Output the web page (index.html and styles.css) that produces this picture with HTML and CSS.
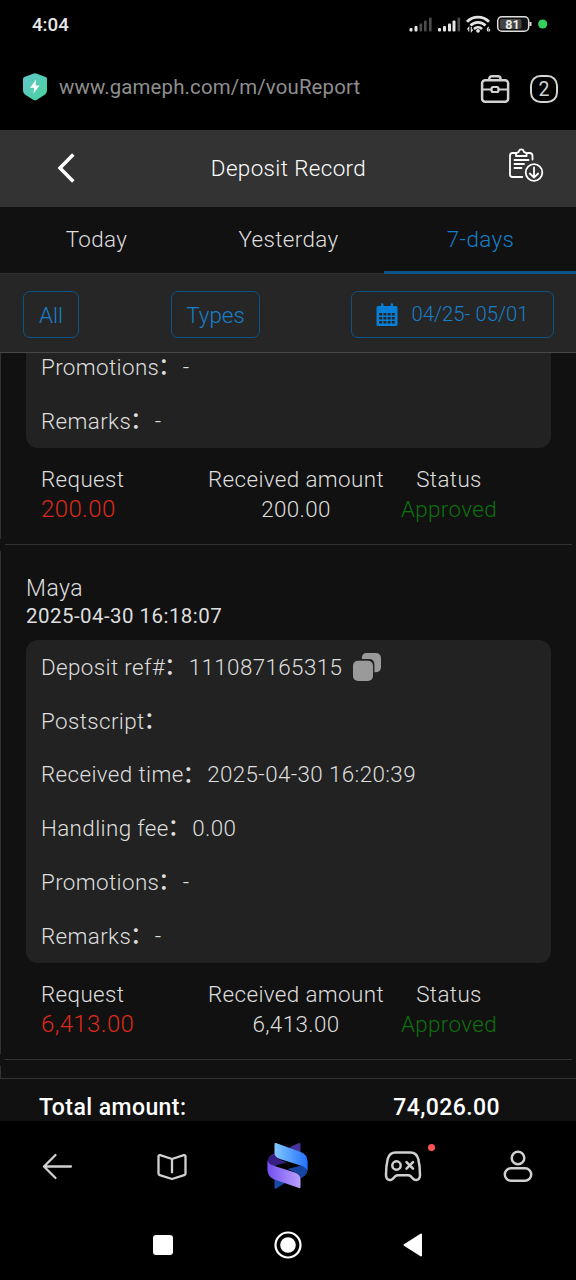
FILE: index.html
```html
<!DOCTYPE html>
<html lang="en">
<head>
<meta charset="utf-8">
<title>Deposit Record</title>
<link rel="stylesheet" href="styles.css">
</head>
<body>
<div class="statusbar">
  <span class="clock">4:04</span>
  <svg class="status-icons" width="142" height="24" viewBox="0 0 142 24">
    <g fill="#e4e4e4">
      <rect x="0.500" y="16" width="3" height="3.500" rx="1"/><rect x="5.500" y="14" width="3" height="5.500" rx="1"/>
      <rect x="29" y="16" width="3" height="3.500" rx="1"/><rect x="34" y="14" width="3" height="5.500" rx="1"/><rect x="39" y="11.500" width="3" height="8" rx="1"/><rect x="43.500" y="8.500" width="3" height="11" rx="1"/>
    </g>
    <g fill="#4c4c4c">
      <rect x="10.500" y="11.500" width="2.600" height="8" rx="1"/><rect x="15" y="8.500" width="2.600" height="11" rx="1"/><rect x="20" y="5.500" width="2.600" height="14" rx="1"/><rect x="48.500" y="5.500" width="2.600" height="14" rx="1"/>
    </g>
    <g fill="none" stroke="#e4e4e4" stroke-width="2.700">
      <path d="M58 9.800a15.300 15.300 0 0 1 22 0"/><path d="M61.500 13.500a10.500 10.500 0 0 1 15 0"/><path d="M65 17a5.800 5.800 0 0 1 8 0"/>
    </g>
    <circle cx="69" cy="18.800" r="1.900" fill="#e4e4e4"/>
    <path d="M59.800 19.500v-4l-1.600 2M62.300 15v4.500l1.600-2M80 15c-2 .5-2.300 4-.6 4 2 0 1.700-2.500-.6-1.800" fill="none" stroke="#e4e4e4" stroke-width="1.100"/>
    <rect x="88.700" y="4.700" width="31" height="14.600" rx="4.300" fill="#111" stroke="#dedede" stroke-width="1.500"/>
    <rect x="91" y="7" width="21.500" height="10" rx="2" fill="#444"/>
    <path d="M121.500 10v4" stroke="#dedede" stroke-width="2"/>
    <text x="103.500" y="16.800" text-anchor="middle" class="battery">81</text>
    <circle cx="133.700" cy="12" r="4.600" fill="#35cf5e"/>
  </svg>
</div>
<div class="urlbar">
  <svg width="26" height="30" viewBox="0 0 26 30">
    <defs><linearGradient id="shield" x1="0" y1="0" x2="1" y2="1"><stop offset="0" stop-color="#63c5cb"/><stop offset="1" stop-color="#46d49c"/></linearGradient></defs>
    <path d="M11.800 1.500q1.200-.6 2.400 0l9.500 3.400q1.300.5 1.300 2V18q0 3.500-3 5.300l-7.500 4.600q-1.500.8-3 0L4 23.300Q1 21.500 1 18V6.900q0-1.500 1.300-2z" fill="url(#shield)"/>
    <path d="M14.200 7.500 8 15.800h4.200L11.500 21.500l6-8.100h-4z" fill="#fff"/>
  </svg>
  <span class="url">www.gameph.com/m/vouReport</span>
  <svg class="case" width="30" height="30" viewBox="0 0 30 30" fill="none" stroke="#d2d2d2" stroke-width="2.500">
    <rect x="2.100" y="6.200" width="26" height="21.500" rx="3"/><path d="M9.300 6V4.800a2.600 2.600 0 0 1 2.600-2.600h6a2.600 2.600 0 0 1 2.600 2.600V6"/>
    <path d="M2 15.500h9.500M18.500 15.500H28" stroke-width="1.800"/><rect x="11.600" y="13" width="6.800" height="5" rx="1.500" stroke-width="2.200"/>
  </svg>
  <span class="tabcount">2</span>
</div>
<header class="header">
  <svg width="20" height="30" viewBox="0 0 20 30" fill="none" stroke="#fff" stroke-width="3.500"><path d="M17.300 1.500 4 15l13.300 13.500"/></svg>
  <h1>Deposit Record</h1>
  <svg class="export" width="36" height="36" viewBox="0 0 36 36" fill="none" stroke="#fff" stroke-width="1.800" stroke-linecap="round" stroke-linejoin="round">
    <path d="M7.500 5H4.500Q2 5 2 7.500v19Q2 29 4.500 29h9.800M19.500 5h2q3 0 3 3v3.500"/>
    <path d="M8 8V6.200q0-1.500 1.500-1.700Q10.800 4.200 11 3q.4-1.600 2.300-1.600T15.600 3q.2 1.200 1.500 1.500 1.500.2 1.500 1.700V8z"/>
    <path d="M6.500 12h14M6.500 16h9.500M6.500 20h7"/><circle cx="26" cy="24.500" r="8.300"/><path d="M26 19.500v10M21.800 25.500l4.200 4 4.200-4"/>
  </svg>
</header>
<nav class="tabs"><a>Today</a><a>Yesterday</a><a class="active">7-days</a></nav>
<div class="filters">
  <button class="all">All</button>
  <button class="types">Types</button>
  <button class="dates">
    <svg width="22" height="24" viewBox="0 0 22 24"><path d="M2 3h3V1.500a1.200 1.200 0 0 1 2.400 0V3h7.200V1.500a1.200 1.200 0 0 1 2.400 0V3h3q1.500 0 1.500 1.500v17q0 1.500-1.500 1.500H2Q.5 23 .5 21.500v-17Q.5 3 2 3z" fill="#087fd7"/>
    <path d="M3.200 11.300h15.600M3.200 15.300h15.600M3.200 19.300h15.600" stroke="#262626" stroke-width="2.600" stroke-dasharray="3 1.200"/></svg>
    <span>04/25- 05/01</span>
  </button>
</div>
<main class="list">
  <section class="record first">
    <div class="card"><p>Promotions<b>：</b>-</p><p>Remarks<b>：</b>-</p></div>
    <div class="amounts">
      <div><span>Request</span><span class="red">200.00</span></div>
      <div><span>Received amount</span><span>200.00</span></div>
      <div><span>Status</span><span class="green">Approved</span></div>
    </div>
  </section>
  <section class="record">
    <div class="method">Maya</div>
    <div class="date">2025-04-30 16:18:07</div>
    <div class="card">
      <p>Deposit ref#<b>：</b>111087165315<svg class="copy" width="30" height="30" viewBox="0 0 30 30" fill="#9a9a9a"><path d="M14 1h9.500Q29 1 29 6.500V15q0 5-5 5.300h-1.600V12.500Q22.400 7 17 7H9.800Q9.800 1 14 1z"/><rect x="1" y="8.700" width="20" height="20.300" rx="5"/></svg></p>
      <p>Postscript<b>：</b></p>
      <p>Received time<b>：</b>2025-04-30 16:20:39</p>
      <p>Handling fee<b>：</b>0.00</p>
      <p>Promotions<b>：</b>-</p>
      <p>Remarks<b>：</b>-</p>
    </div>
    <div class="amounts">
      <div><span>Request</span><span class="red">6,413.00</span></div>
      <div><span>Received amount</span><span>6,413.00</span></div>
      <div><span>Status</span><span class="green">Approved</span></div>
    </div>
  </section>
  <section class="record next"></section>
</main>
<div class="total"><span>Total amount:</span><span>74,026.00</span></div>
<nav class="toolbar">
  <svg width="36" height="36" viewBox="0 0 36 36" fill="none" stroke="#d0d0d0" stroke-width="2.300" stroke-linecap="round" stroke-linejoin="round"><path d="M32 18.500H5M16.500 7 5 18.500 16.500 30"/></svg>
  <svg class="book" width="36" height="36" viewBox="0 0 36 36" fill="none" stroke="#d0d0d0" stroke-width="2.300" stroke-linecap="round" stroke-linejoin="round"><path d="M18 10 6.300 6.200Q4.500 5.800 4.500 7.500v17q0 1.300 1.300 1.700L18 30l12.200-3.800q1.300-.4 1.300-1.700v-17q0-1.700-1.800-1.300L18 10v13.300"/></svg>
  <svg width="44" height="48" viewBox="0 0 44 48">
    <defs>
      <linearGradient id="blue"><stop offset="0" stop-color="#82c8ff"/><stop offset="1" stop-color="#2372ff"/></linearGradient>
      <linearGradient id="violet"><stop offset="0" stop-color="#7350f0"/><stop offset="1" stop-color="#bba0ff"/></linearGradient>
    </defs>
    <path d="M25 4.500 33 1q1.500-.6 1.500 1v12L21 8z" fill="#46329b"/>
    <path d="M19 41 10 46.700q-1.500.4-1.500-1V35z" fill="#1749a4"/>
    <path d="M41.500 18v9q0 6-6 9l-1.500.8q.5-4.500-5.500-6.800l-7-3 12-3q7-2 8-6z" fill="#1646a3"/>
    <path d="M1.500 29V20q0-6 6-8.500l1.500-.6q0 4.600 5 6.600l7 3-10 2.500z" fill="#371e83"/>
    <path d="M8.500 2q0-1.500 1.500-1L34 9.700q7.500 2.500 7.500 10V29q-.5-3.500-7-5.500L14 17Q8.500 15 8.500 11z" fill="url(#blue)"/>
    <path d="M1.500 18.500q1 4 7 5.500L29 30.500q5.500 2 5.500 7V45q0 1.500-1.500 1L9 37.800q-7.500-2.600-7.500-10z" fill="url(#violet)"/>
  </svg>
  <span class="games">
    <svg width="40" height="36" viewBox="0 0 40 36" fill="none" stroke="#d0d0d0" stroke-width="2.500" stroke-linecap="round" stroke-linejoin="round"><path d="M12.500 4.500h15Q33.500 4.500 35.300 11 37 18 37 27q0 4.500-3.500 5-2 .3-3.500-1.300L27.500 28q-1-.8-2.500-.8H15q-1.500 0-2.500.8L10 30.700Q8.500 32.300 6.500 32 3 31.500 3 27q0-9 1.700-16 1.800-6.500 7.800-6.500z"/><circle cx="13.500" cy="17.500" r="4.200"/><path d="m23.500 14.200 6.500 6.500m0-6.500-6.500 6.500"/></svg>
    <i class="dot"></i>
  </span>
  <svg width="36" height="36" viewBox="0 0 36 36" fill="none" stroke="#d0d0d0" stroke-width="2.500"><circle cx="18" cy="10" r="6.300"/><rect x="4.800" y="20.300" width="26.400" height="12.400" rx="6.200"/></svg>
</nav>
<div class="sysnav">
  <svg width="20" height="20" viewBox="0 0 20 20"><rect width="20" height="20" rx="3" fill="#fff"/></svg>
  <svg width="28" height="28" viewBox="0 0 28 28"><circle cx="14" cy="14" r="12.500" fill="none" stroke="#fff" stroke-width="2.200"/><circle cx="14" cy="14" r="7.800" fill="#fff"/></svg>
  <svg width="20" height="24" viewBox="0 0 20 24"><path d="M18 1.500v21L1.500 12z" fill="#fff" stroke="#fff" stroke-width="2" stroke-linejoin="round"/></svg>
</div>
</body>
</html>
```
FILE: styles.css
```css
* { box-sizing: border-box; }
body {
  margin: 0;
  width: 576px;
  height: 1280px;
  overflow: hidden;
  background: #000;
  color: #dedede;
  font: 300 22.400px/30px Roboto, "Noto Sans CJK SC", sans-serif;
  letter-spacing: .38px;
  white-space: nowrap;
  display: flex;
  flex-direction: column;
}
svg { display: block; flex: none; }

.statusbar { height: 50px; display: flex; justify-content: space-between; padding: 10px 25px 0 32px; }
.clock { font-size: 18.700px; font-weight: 500; color: #e6e6e6; letter-spacing: 0; }
.status-icons { margin-top: 2px; }
.battery { font: 700 12.500px Roboto, sans-serif; fill: #ededed; letter-spacing: .2px; }

.urlbar { height: 80px; display: flex; align-items: center; padding: 0 18px 6px 22px; }
.url { flex: 1; margin-left: 11px; font-size: 20.400px; font-weight: 400; color: #8f8f8f; letter-spacing: .15px; }
.case { margin-right: 20px; margin-top: 4px; }
.tabcount {
  width: 28px; height: 28px; margin-top: 4px;
  border: 2.500px solid #d2d2d2; border-radius: 10.500px;
  font-size: 19.500px; font-weight: 400; line-height: 25px; letter-spacing: 0; text-align: center; color: #d2d2d2;
}

.header { height: 77px; background: #333; display: flex; align-items: center; justify-content: space-between; padding: 0 32px 2px 56px; }
.header h1 { margin: 0; padding-right: 7px; flex: 1; text-align: center; font: inherit; color: #fff; }
.export { margin-bottom: 3px; }
.tabs { height: 67px; background: #111; display: grid; grid-template-columns: repeat(3, 1fr); border-bottom: 1px solid #333; }
.tabs a { text-align: center; line-height: 65px; height: 67px; padding-left: 1px; }
.tabs .active { color: #177fca; border-bottom: 3px solid #0c5487; }

.filters { height: 79px; background: #262626; border-bottom: 1px solid #484848; display: flex; align-items: flex-start; padding: 17px 22px 0 23px; }
.filters button {
  height: 47px; padding: 0; background: none; border: 1px solid #0c5487; border-radius: 7px;
  color: #177fca; font: inherit; font-size: 22.400px; letter-spacing: 0;
  display: flex; align-items: center; justify-content: center;
}
.filters .all { width: 56px; }
.filters .types { width: 89px; margin-left: 92px; }
.filters .dates { width: 203px; margin-left: auto; gap: 13px; font-size: 20.320px; }
.dates span { padding-bottom: 2px; }

.list { height: 725px; background: #111; overflow: hidden; }
.record {
  height: 515px; padding: 28px 25px 0 26px;
  background:
    linear-gradient(#333, #333) 5px 100% / 567px 1px no-repeat,
    linear-gradient(#333, #333) 0 6px / 1px calc(100% - 12px) no-repeat;
}
.record.first { height: 192px; padding-top: 0; background-position: 5px 100%, 0 0; background-size: 567px 1px, 1px 186px; }
.record.next { height: 40px; }
.method { font-size: 23px; padding-top: 1px; height: 30px; letter-spacing: .5px; }
.date { font-size: 20.500px; line-height: 26px; font-weight: 400; margin-bottom: 12px; letter-spacing: .45px; }
.card { background: #222; border-radius: 12px; padding: 0 15px; height: 323px; margin-top: -1px; }
.first .card { margin-top: 0; border-radius: 0 0 12px 12px; height: 95px; overflow: hidden; display: flex; flex-direction: column; justify-content: flex-end; }
.card p { margin: 0; height: 53.800px; flex: none; line-height: 52px; display: flex; align-items: center; }
.card b { font-weight: 500; width: 24.500px; margin-left: -1px; padding-bottom: 2px; }
.copy { margin-left: 10px; }
.amounts { display: grid; grid-template-columns: 168px 174px 1fr; padding: 16px 0 0 15px; }
.amounts div { display: flex; flex-direction: column; align-items: center; }
.amounts div:nth-child(2) { margin: 0 -4px; }
.amounts div:first-child { align-items: flex-start; }
.amounts div:last-child { width: 132px; }
.amounts .red { color: #dc2a1a; font-size: 24px; }
.amounts .green { color: #0e700e; }

.total { height: 43px; background: #111; border-top: 1px solid #333; display: flex; justify-content: space-between; padding: 14px 76px 0 39px; color: #fff; font-size: 23px; font-weight: 500; letter-spacing: .42px; }
.total span { height: 28px; }

.toolbar { height: 90px; padding: 0 40px 0 39px; display: grid; grid-template-columns: 115px 112px 117px 1fr 36px; align-items: center; }
.book { margin-top: 1px; }
.games { position: relative; width: 40px; }
.dot { position: absolute; right: -12px; top: -4px; width: 7px; height: 7px; border-radius: 50%; background: #ff5252; }
.sysnav { height: 67px; display: flex; align-items: center; justify-content: space-between; padding: 0 153px; }
```
